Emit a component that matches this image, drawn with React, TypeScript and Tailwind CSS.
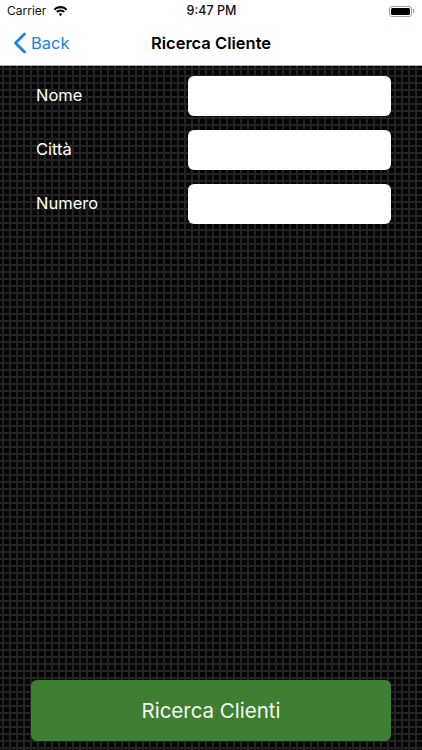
import React from 'react';

const fields = ['Nome', 'Città', 'Numero'];

const StatusBar = () => (
    <div className="relative flex h-[22px] items-center px-[7px] text-[12px] text-[#111111]">
        <span className="mr-[7px]">Carrier</span>
        <svg width="15" height="11" viewBox="0 0 15 11" fill="black">
            <path d="M7.5 2.3c2.1 0 4 .8 5.4 2.2l1.4-1.5C12.5 1.2 10.1.1 7.5.1S2.5 1.2.7 3l1.4 1.5c1.4-1.4 3.3-2.2 5.4-2.2z" />
            <path d="M7.5 5.6c1.1 0 2.1.4 2.9 1.2l1.5-1.5c-1.2-1.1-2.7-1.8-4.4-1.8s-3.2.7-4.4 1.8l1.5 1.5c.8-.8 1.8-1.2 2.9-1.2z" />
            <path d="M7.5 7.3c-.7 0-1.3.3-1.8.7l1.8 2.2L9.3 8c-.5-.4-1.1-.7-1.8-.7z" />
        </svg>
        <span className="absolute left-0 right-0 pl-[1px] text-center text-[12.5px] font-medium">9:47 PM</span>
        <div className="ml-auto mr-[1px] flex items-center">
            <div className="h-[11px] w-[23px] rounded-[3px] border border-gray-400 p-[1px]">
                <div className="h-full w-full rounded-[1.5px] bg-black" />
            </div>
            <div className="ml-[1px] h-1 w-[1px] bg-gray-400" />
        </div>
    </div>
);

const NavBar = () => (
    <div className="relative flex h-[44px] items-center border-b border-[#a8a8a8] pb-[1px] pl-[13px]">
        <svg width="14" height="22" viewBox="0 0 14 22" fill="none" stroke="#1a7fe8" strokeWidth="2.8" strokeLinecap="round" strokeLinejoin="round">
            <path d="M11.5 2 2.5 11l9 9" />
        </svg>
        <span className="ml-[4px] text-[16.5px] text-[#1a7fe8]">Back</span>
        <span className="absolute left-0 right-0 text-center text-[16.5px] font-semibold text-black">Ricerca Cliente</span>
    </div>
);

export default function App() {
    return (
        <div className="flex h-[750px] w-[422px] flex-col overflow-hidden bg-white font-['Inter',sans-serif]">
            <StatusBar />
            <NavBar />
            <div className="flex flex-1 flex-col justify-between bg-[#060606] bg-[linear-gradient(#232323_2px,transparent_2px),linear-gradient(90deg,#232323_2px,transparent_2px)] bg-[size:7px_7px] bg-[position:2px_2px] pb-[9px] pl-[31px] pr-[31px] pt-[10px]">
                <div className="flex flex-col gap-[14px]">
                    {fields.map((label) => (
                        <div key={label} className="flex h-10 items-start">
                            <span className="w-[157px] pl-[5px] pt-[9px] text-[16.5px] leading-5 text-white">{label}</span>
                            <div className="h-10 flex-1 rounded-[6px] bg-white" />
                        </div>
                    ))}
                </div>
                <button className="h-[61px] w-full rounded-[6px] bg-[#3f7f32] pt-[1px] text-[20.5px] text-[#f2f6f0]">
                    Ricerca Clienti
                </button>
            </div>
        </div>
    );
}
